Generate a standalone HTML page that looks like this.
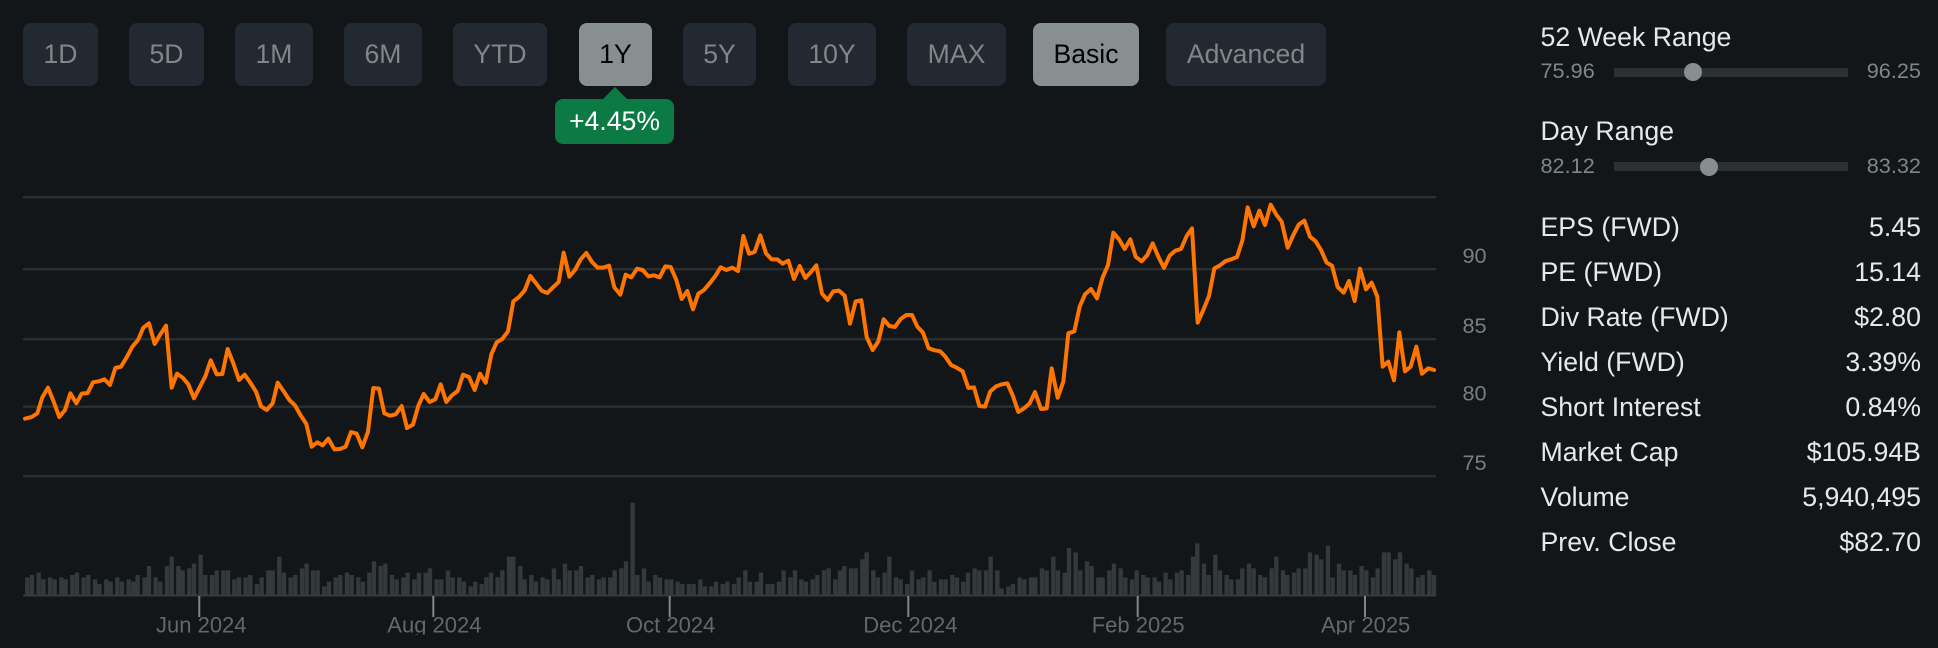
<!DOCTYPE html>
<html>
<head>
<meta charset="utf-8">
<style>
html,body{margin:0;padding:0;background:#121619;width:1938px;height:648px;overflow:hidden}
body{position:relative;font-family:"Liberation Sans",sans-serif}
.b{position:absolute;top:23px;height:63px;line-height:63px;text-align:center;background:#222930;color:#7f8789;border-radius:8px;font-size:26.6px;box-sizing:border-box}
.on{background:#878f90;color:#000}
.pill{position:absolute;left:555px;top:99px;width:119px;height:45px;line-height:45px;text-align:center;background:#0b7a45;color:#fff;border-radius:8px;font-size:26.6px}
.arrow{position:absolute;left:602.5px;top:87px;width:0;height:0;border-left:12.5px solid transparent;border-right:12.5px solid transparent;border-bottom:12px solid #0b7a45}
.t{position:absolute;white-space:nowrap;line-height:30px;font-size:26.7px;color:#e6e9ec}
.l{left:1540.5px}
.r{right:17px}
.s{font-size:21.7px;color:#7f8688;line-height:24px}
.track{position:absolute;left:1614px;width:234px;height:9px;background:#2c3033}
.thumb{position:absolute;width:18px;height:18px;border-radius:50%;background:#868e90}
svg{position:absolute;left:0;top:0}
</style>
</head>
<body>
<div class="b" style="left:23px;width:75px">1D</div>
<div class="b" style="left:129px;width:75px">5D</div>
<div class="b" style="left:235px;width:78px">1M</div>
<div class="b" style="left:344px;width:78px">6M</div>
<div class="b" style="left:453px;width:94px">YTD</div>
<div class="b on" style="left:579px;width:73px">1Y</div>
<div class="b" style="left:683px;width:73px">5Y</div>
<div class="b" style="left:788px;width:88px">10Y</div>
<div class="b" style="left:907px;width:99px">MAX</div>
<div class="b on" style="left:1033px;width:106px">Basic</div>
<div class="b" style="left:1166px;width:160px">Advanced</div>
<div class="arrow"></div>
<div class="pill">+4.45%</div>

<svg width="1938" height="648" viewBox="0 0 1938 648" font-family="'Liberation Sans',sans-serif">
<defs><clipPath id="c"><rect x="0" y="600" width="1500" height="34.5"/></clipPath></defs>
<g fill="#2b2f32">
<rect x="23" y="196" width="1413" height="2.4"/>
<rect x="23" y="268" width="1413" height="2.4"/>
<rect x="23" y="338" width="1413" height="2.4"/>
<rect x="23" y="405.5" width="1413" height="2.4"/>
<rect x="23" y="475" width="1413" height="2.4"/>
</g>
<g fill="#787f81" font-size="21.7">
<text x="1462.5" y="263">90</text>
<text x="1462.5" y="333">85</text>
<text x="1462.5" y="400.7">80</text>
<text x="1462.5" y="470">75</text>
</g>
<g fill="none" stroke="#ff7500" stroke-width="12" stroke-linejoin="round" stroke-linecap="round">
<polyline transform="translate(0,200) scale(.33333)" points="75,656 95,651 112,640 127,592 144,563 161,605 178,651 195,630 211,580 229,610 245,581 263,579 279,547 296,544 313,538 330,555 346,504 363,500 380,472 397,440 414,420 430,383 447,370 464,432 481,403 498,377 515,563 531,521 548,533 565,553 582,595 599,562 616,529 632,481 650,523 667,522 683,447 700,490 717,540 734,524 751,548 768,575 783,619 800,630 818,610 833,548 851,574 868,600 885,616 902,646 919,672 935,740 952,727 968,736 985,716 1003,748 1020,747 1037,740 1053,696 1070,701 1087,742 1104,695 1120,564 1137,566 1153,640 1170,647 1187,643 1205,618 1221,684 1239,674 1255,617 1271,582 1289,606 1306,598 1322,553 1339,606 1356,586 1373,573 1389,524 1407,531 1424,570 1440,521 1457,548"/>
<polyline transform="translate(480,200) scale(.33333)" points="17,548 34,463 50,427 67,417 84,394 100,304 117,291 134,271 151,228 168,250 185,272 202,279 219,262 236,246 251,158 268,230 285,210 302,178 319,159 336,186 353,203 370,203 387,197 403,262 421,284 437,224 454,232 471,206 488,210 505,229 522,226 539,232 556,199 572,201 589,240 605,297 622,273 639,328 655,281 672,270 689,250 706,228 722,202 739,210 757,203 774,213 790,108 807,161 824,156 841,106 858,160 875,178 892,178 908,191 925,182 942,237 959,198 976,234 993,216 1009,196 1026,281 1043,300 1060,274 1077,272 1094,287 1110,371 1127,304 1144,301 1160,411 1178,450 1195,424 1211,358 1228,378 1245,381 1262,357 1279,345 1296,345 1312,380 1329,398 1346,445 1364,451 1381,454 1396,470 1413,495 1430,503 1448,514"/>
<polyline transform="translate(960,200) scale(.33333)" points="8,514 25,564 42,562 58,618 75,620 91,574 108,559 125,553 142,550 158,586 175,636 192,625 209,610 225,576 243,627 260,625 275,505 293,593 310,545 325,400 343,394 359,320 375,283 393,267 411,295 427,235 444,195 460,98 477,118 494,147 511,118 527,170 545,184 562,165 578,130 595,170 612,204 629,167 646,152 663,147 680,108 696,85 713,368 730,330 747,288 763,205 780,196 797,183 814,178 831,171 847,122 863,22 881,79 898,32 915,75 932,14 949,44 965,65 983,143 1000,105 1016,74 1033,62 1050,110 1067,124 1083,150 1100,188 1116,197 1133,261 1151,278 1167,243 1184,303 1200,206 1218,268 1235,248 1252,290 1268,500 1285,485 1302,541 1318,397 1335,514 1352,500 1369,440 1386,521 1405,505 1422,510"/>
</g>
<g stroke="#34393c" stroke-width="13" fill="none">
<path transform="translate(0,490) scale(.33333)" d="M82 262V316M96 255V316M116 248V316M130 268V316M150 262V316M164 268V316M184 262V316M197 268V316M217 255V316M231 248V316M251 262V316M265 255V316M285 268V316M298 282V316M319 268V316M332 275V316M352 262V316M366 275V316M386 268V316M400 275V316M413 255V316M434 262V316M447 228V316M467 262V316M481 275V316M501 228V316M515 200V316M535 228V316M548 241V316M568 235V316M582 221V316M602 194V316M616 255V316M636 255V316M650 241V316M670 241V316M684 241V316M703 268V316M717 262V316M737 262V316M751 255V316M771 282V316M785 262V316M805 241V316M818 241V316M838 200V316M852 248V316M872 262V316M886 255V316M906 235V316M920 221V316M939 241V316M953 241V316M973 289V316M987 275V316M1007 262V316M1021 255V316M1041 248V316M1055 255V316M1075 262V316M1089 275V316M1108 248V316M1122 214V316M1142 228V316M1156 221V316M1176 255V316M1190 268V316M1210 262V316M1223 248V316M1243 268V316M1257 248V316M1277 248V316M1290 235V316M1310 268V316M1324 268V316M1344 241V316M1358 262V316M1378 262V316M1392 275V316M1412 289V316M1426 275V316"/>
<path transform="translate(480,490) scale(.33333)" d="M5 282V316M19 262V316M33 248V316M53 262V316M67 241V316M87 200V316M100 200V316M121 228V316M134 268V316M154 255V316M168 275V316M188 262V316M202 268V316M222 235V316M236 268V316M255 221V316M269 241V316M289 241V316M303 228V316M323 262V316M337 255V316M357 268V316M371 262V316M391 262V316M404 241V316M424 235V316M438 214V316M458 38V316M472 255V316M492 235V316M506 275V316M526 255V316M540 262V316M560 268V316M574 268V316M593 275V316M607 282V316M627 282V316M641 282V316M661 268V316M675 289V316M694 289V316M708 275V316M728 282V316M742 275V316M762 282V316M776 262V316M796 241V316M810 275V316M830 275V316M843 248V316M863 282V316M877 282V316M897 275V316M911 241V316M931 262V316M945 241V316M964 268V316M978 275V316M998 268V316M1012 255V316M1032 241V316M1046 235V316M1066 268V316M1080 241V316M1093 228V316M1113 235V316M1127 235V316M1147 208V316M1160 187V316M1180 241V316M1194 262V316M1214 248V316M1228 200V316M1248 262V316M1262 268V316M1282 282V316M1296 241V316M1316 268V316M1330 262V316M1349 241V316M1363 275V316M1383 268V316M1397 268V316M1417 255V316M1431 262V316"/>
<path transform="translate(960,490) scale(.33333)" d="M10 275V316M24 248V316M44 235V316M58 241V316M78 241V316M92 200V316M112 241V316M125 295V316M145 289V316M159 282V316M179 262V316M193 268V316M213 262V316M226 262V316M246 235V316M260 241V316M280 200V316M294 241V316M314 248V316M327 174V316M347 187V316M361 241V316M381 214V316M395 228V316M415 262V316M428 262V316M448 241V316M462 221V316M482 235V316M496 262V316M516 268V316M530 241V316M550 255V316M563 262V316M584 262V316M597 275V316M617 248V316M631 268V316M651 248V316M665 241V316M685 255V316M699 200V316M712 160V316M732 221V316M746 255V316M766 194V316M780 241V316M800 255V316M814 268V316M834 268V316M847 235V316M867 221V316M881 235V316M901 255V316M915 262V316M935 235V316M949 200V316M969 241V316M982 255V316M1002 248V316M1016 235V316M1036 235V316M1050 187V316M1070 194V316M1084 208V316M1104 167V316M1118 262V316M1137 221V316M1151 241V316M1171 241V316M1185 255V316M1205 228V316M1219 241V316M1239 262V316M1253 235V316M1272 187V316M1286 187V316M1306 208V316M1320 187V316M1340 221V316M1354 235V316M1374 262V316M1388 255V316M1408 241V316M1422 255V316"/>
</g>
<rect x="23" y="594.5" width="1413" height="2" fill="#373b3e"/>
<g clip-path="url(#c)" fill="#62686a" font-size="22">
<text x="156" y="632.7">Jun 2024</text>
<text x="387.3" y="632.7">Aug 2024</text>
<text x="626" y="632.7">Oct 2024</text>
<text x="863.3" y="632.7">Dec 2024</text>
<text x="1091.7" y="632.7">Feb 2025</text>
<text x="1321" y="632.7">Apr 2025</text>
</g>
<g fill="#7f8788">
<rect x="198.3" y="596" width="2" height="21"/>
<rect x="432.3" y="596" width="2" height="21"/>
<rect x="668.7" y="596" width="2" height="21"/>
<rect x="907.3" y="596" width="2" height="21"/>
<rect x="1136.7" y="596" width="2" height="21"/>
<rect x="1364" y="596" width="2" height="21"/>
</g>
</svg>

<div class="t l" style="top:22px">52 Week Range</div>
<div class="t s l" style="top:59px">75.96</div>
<div class="t s r" style="top:59px">96.25</div>
<div class="track" style="top:68px"></div>
<div class="thumb" style="left:1684px;top:63px"></div>

<div class="t l" style="top:116px">Day Range</div>
<div class="t s l" style="top:154px">82.12</div>
<div class="t s r" style="top:154px">83.32</div>
<div class="track" style="top:162px"></div>
<div class="thumb" style="left:1700px;top:158px"></div>

<div class="t l" style="top:212px">EPS (FWD)</div><div class="t r" style="top:212px">5.45</div>
<div class="t l" style="top:257px">PE (FWD)</div><div class="t r" style="top:257px">15.14</div>
<div class="t l" style="top:302px">Div Rate (FWD)</div><div class="t r" style="top:302px">$2.80</div>
<div class="t l" style="top:347px">Yield (FWD)</div><div class="t r" style="top:347px">3.39%</div>
<div class="t l" style="top:392px">Short Interest</div><div class="t r" style="top:392px">0.84%</div>
<div class="t l" style="top:437px">Market Cap</div><div class="t r" style="top:437px">$105.94B</div>
<div class="t l" style="top:482px">Volume</div><div class="t r" style="top:482px">5,940,495</div>
<div class="t l" style="top:527px">Prev. Close</div><div class="t r" style="top:527px">$82.70</div>
</body>
</html>
